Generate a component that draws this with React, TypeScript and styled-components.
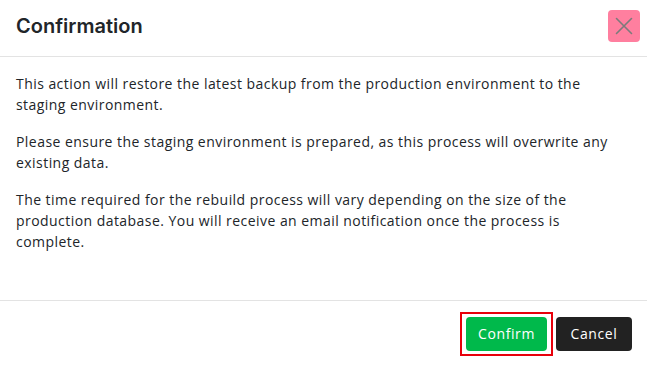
import React from "react";
import styled, { createGlobalStyle } from "styled-components";

const GlobalStyle = createGlobalStyle`
  html, body {
    margin: 0;
    padding: 0;
    background: #ffffff;
  }
  body {
    font-family: "Open Sans", "Noto Sans", sans-serif;
    color: #212529;
  }
`;

const Modal = styled.div`
  width: 647px;
  height: 366px;
  display: flex;
  flex-direction: column;
  background: #fff;
`;

const Header = styled.div`
  display: flex;
  align-items: center;
  justify-content: space-between;
  height: 57px;
  padding: 0 7px 4px 16px;
  box-sizing: border-box;
  border-bottom: 1px solid #e3e3e3;
`;

const Title = styled.h5`
  margin: 0;
  font-family: "Inter", "Noto Sans", sans-serif;
  font-size: 20px;
  font-weight: 600;
  color: #212529;
`;

const CloseButton = styled.button`
  width: 32px;
  height: 32px;
  padding: 0;
  border: none;
  border-radius: 4px;
  background: #ff7f9f;
  display: flex;
  align-items: center;
  justify-content: center;
  cursor: pointer;
`;

const Body = styled.div`
  flex: 1;
  padding: 16px 16px 0 16px;
`;

const Paragraph = styled.p`
  margin: 0 0 16px 0;
  font-size: 14px;
  line-height: 21px;
  letter-spacing: 0.45px;
  color: #212529;
`;

const Footer = styled.div`
  display: flex;
  justify-content: flex-end;
  align-items: center;
  gap: 3px;
  height: 66px;
  padding: 0 15px 0 16px;
  box-sizing: border-box;
  border-top: 1px solid #e3e3e3;
`;

const FocusRing = styled.span`
  display: inline-flex;
  padding: 3px 4px;
  border: 2px solid #e8000b;
`;

const Button = styled.button<{ $variant: "success" | "dark" }>`
  height: 34px;
  width: ${(p) => (p.$variant === "success" ? "81px" : "76px")};
  padding: 0;
  border: none;
  border-radius: 4px;
  font-family: "Open Sans", "Noto Sans", sans-serif;
  font-size: 14px;
  letter-spacing: 0.6px;
  color: #fff;
  background: ${(p) => (p.$variant === "success" ? "#00b94b" : "#222222")};
  cursor: pointer;
`;

const App = () => {
  return (
    <Modal>
      <GlobalStyle />
      <Header>
        <Title>Confirmation</Title>
        <CloseButton aria-label="Close">
          <svg width="18" height="18" viewBox="0 0 18 18">
            <path
              d="M1.5 1.5 L16.5 16.5 M16.5 1.5 L1.5 16.5"
              stroke="#7b7b7b"
              strokeWidth="1.6"
              strokeLinecap="round"
            />
          </svg>
        </CloseButton>
      </Header>
      <Body>
        <Paragraph>
          This action will restore the latest backup from the production
          environment to the staging environment.
        </Paragraph>
        <Paragraph>
          Please ensure the staging environment is prepared, as this process
          will overwrite any existing data.
        </Paragraph>
        <Paragraph>
          The time required for the rebuild process will vary depending on the
          size of the production database. You will receive an email
          notification once the process is complete.
        </Paragraph>
      </Body>
      <Footer>
        <FocusRing>
          <Button $variant="success">Confirm</Button>
        </FocusRing>
        <Button $variant="dark">Cancel</Button>
      </Footer>
    </Modal>
  );
};

export default App;
